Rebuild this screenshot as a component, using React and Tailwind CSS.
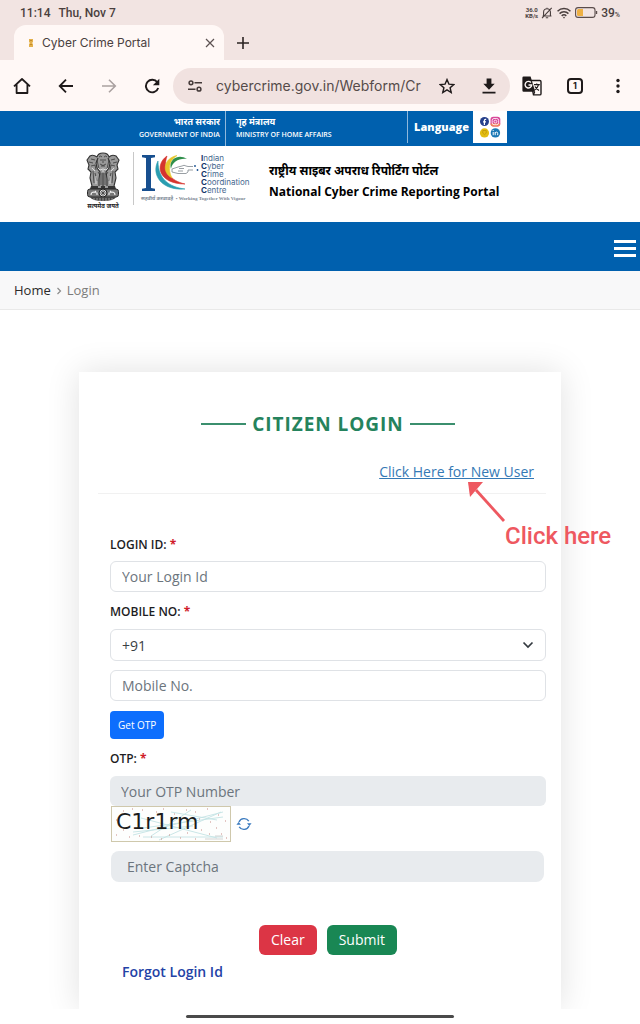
import { useState } from "react";

function Favicon() {
  return (
    <svg viewBox="0 0 8 10" className="h-[10px] w-2 shrink-0" aria-hidden="true">
      <path d="M2 1h4v3L5 5l1 1v3H2V6l1-1-1-1z" fill="#e3b04b" />
      <path d="M3 2h2v1H3zM3 6h2v1H3z" fill="#c48a2a" />
    </svg>
  );
}

function StatusBar() {
  return (
    <div className="flex h-[25px] items-center justify-between pl-5 pr-5 font-['Roboto',sans-serif] text-[#4a3f3e]">
      <div className="flex gap-2 text-xs font-medium">
        <span>11:14</span>
        <span>Thu, Nov 7</span>
      </div>
      <div className="flex items-center gap-[3px]">
        <div className="text-center text-[6px] font-bold leading-[6px]">
          36.0
          <br />
          KB/s
        </div>
        <svg viewBox="0 0 14 14" className="size-3" fill="none" stroke="currentColor" strokeWidth="1.3">
          <path d="M3 10.3V6a4 4 0 0 1 8 0v4.3M1.8 10.5h10.4M5.6 12.6h2.8M7 .8V2M12.5 1 1.2 13" />
        </svg>
        <svg viewBox="0 0 16 13" className="h-3 w-4" fill="none" stroke="currentColor" strokeWidth="1.6">
          <path d="M1 4.6a10 10 0 0 1 14 0M3.2 7.2a6.8 6.8 0 0 1 9.6 0M5.5 9.6a3.6 3.6 0 0 1 5 0" />
          <circle cx="8" cy="11.5" r="0.9" fill="currentColor" stroke="none" />
        </svg>
        <svg viewBox="0 0 23 11" className="h-[11px] w-[23px]" fill="none">
          <rect x="0.6" y="0.6" width="19.4" height="9.8" rx="2.5" stroke="#5a4c4b" strokeWidth="1.1" />
          <path d="M3.5 2H8v7H3.5A1.5 1.5 0 0 1 2 7.5v-4A1.5 1.500 0 0 1 3.500 2z" fill="#eeb044" />
          <path d="M21.5 4v3" stroke="#5a4c4b" strokeWidth="1.4" />
        </svg>
        <span className="text-xs font-medium">
          39<span className="text-[7px]">%</span>
        </span>
      </div>
    </div>
  );
}

function TabStrip() {
  return (
    <div className="flex h-[35px] items-stretch pl-[14px]">
      <div className="flex w-[210px] items-center rounded-t-xl bg-[#fff8f6] pl-[13px] pr-2">
        <Favicon />
        <span className="ml-[7px] flex-1 text-xs text-[#4a4040]">Cyber Crime Portal</span>
        <button type="button" aria-label="Close tab" className="text-[#5c5252]">
          <svg viewBox="0 0 12 12" className="size-3" stroke="currentColor" strokeWidth="1.2">
            <path d="m2 2 8 8M10 2l-8 8" />
          </svg>
        </button>
      </div>
      <button type="button" aria-label="New tab" className="ml-3 text-[#2b2322]">
        <svg viewBox="0 0 14 14" className="size-[14px]" stroke="currentColor" strokeWidth="1.6">
          <path d="M7 1v12M1 7h12" />
        </svg>
      </button>
    </div>
  );
}

function BrowserToolbar() {
  return (
    <div className="flex h-[51px] items-center bg-[#fff8f6] pl-[13px] pr-[19px] text-[#1f1a1a]">
      <div className="flex w-[160px] items-center justify-between pr-[13px]">
        <button type="button" aria-label="Home">
          <svg viewBox="0 0 18 18" className="size-[18px]" fill="none" stroke="currentColor" strokeWidth="1.8">
            <path d="M1 9.3 9 2l8 7.3M3.6 7.2V16h10.8V7.2" strokeLinejoin="round" />
          </svg>
        </button>
        <button type="button" aria-label="Back">
          <svg viewBox="0 0 16 16" className="size-4" fill="none" stroke="currentColor" strokeWidth="1.8">
            <path d="M15 8H2M8 1.7 1.7 8 8 14.3" />
          </svg>
        </button>
        <button type="button" aria-label="Forward" disabled className="text-[#aaa1a0]">
          <svg viewBox="0 0 16 16" className="size-4" fill="none" stroke="currentColor" strokeWidth="1.6">
            <path d="M1 8h13M8 1.7 14.3 8 8 14.3" />
          </svg>
        </button>
        <button type="button" aria-label="Reload">
          <svg viewBox="0 0 16 16" className="size-4" fill="none">
            <path d="M13.3 4.3A6.3 6.3 0 1 0 14.2 10" stroke="currentColor" strokeWidth="1.9" />
            <path d="M15.3.8v6.4H8.9z" fill="currentColor" />
          </svg>
        </button>
      </div>

      <div className="flex h-9 flex-1 items-center rounded-full bg-[#f1e2e0] pl-[14px] pr-[14px]">
        <svg viewBox="0 0 16 14" className="h-[14px] w-4 shrink-0" fill="none" stroke="#443a39" strokeWidth="1.5">
          <circle cx="4" cy="3.8" r="1.9" />
          <circle cx="12" cy="10.2" r="1.9" />
          <path d="M7.5 3.8H15M1 10.2h7.5" />
        </svg>
        <input
          aria-label="Address"
          defaultValue="cybercrime.gov.in/Webform/Cr"
          className="ml-[13px] w-0 flex-1 bg-transparent text-sm text-[#554b4a] outline-none"
        />
        <button type="button" aria-label="Bookmark" className="ml-[14px]">
          <svg viewBox="0 0 16 16" className="size-4" fill="none" stroke="currentColor" strokeWidth="1.4">
            <path d="m8 1.6 1.9 4.5 4.9.4-3.7 3.2 1.1 4.8L8 11.9l-4.200 2.600 1.100-4.800L1.200 6.500l4.900-.4z" />
          </svg>
        </button>
        <button type="button" aria-label="Download" className="ml-[27px]">
          <svg viewBox="0 0 14 16" className="h-4 w-[14px]" fill="currentColor">
            <path d="M4.6.5h4.8v5.3h3.3L7 11.7 1.3 5.8h3.3zM.5 13.7h13v1.7H.5z" />
          </svg>
        </button>
      </div>

      <div className="flex items-center pl-3">
        <button type="button" aria-label="Translate">
          <svg viewBox="0 0 20 20" className="size-5" fill="none">
            <path d="M8.5 4.5h9.3a1.2 1.2 0 0 1 1.2 1.2v12a1.2 1.2 0 0 1-1.2 1.2h-6.3z" stroke="#1f1a1a" strokeWidth="1.4" />
            <path d="M1.6.6h7l4.6 15.2H1.6A1.2 1.2 0 0 1 .4 14.6V1.8A1.2 1.2 0 0 1 1.6.6z" fill="#1f1a1a" />
            <path d="M8.9 6.5A3.3 3.3 0 1 0 9.7 9H6.5" stroke="#fff8f6" strokeWidth="1.4" />
            <path d="M12 8.7h5.8M14.7 7.4v1.3M16.6 8.700c-.6 2.200-2 4-4 5.300M13 10.500c.8 1.600 2.200 3 4 4M12.700 15.800l-1.200 3" stroke="#1f1a1a" strokeWidth="1.2" />
          </svg>
        </button>
        <button
          type="button"
          aria-label="Open tabs"
          className="ml-[25px] flex size-4 items-center justify-center rounded-sm border-2 border-[#1f1a1a] text-[9px] font-bold"
        >
          1
        </button>
        <button type="button" aria-label="Menu" className="ml-8">
          <svg viewBox="0 0 6 16" className="h-4 w-[6px]" fill="currentColor">
            <circle cx="3" cy="2.5" r="1.7" />
            <circle cx="3" cy="8" r="1.7" />
            <circle cx="3" cy="13.5" r="1.7" />
          </svg>
        </button>
      </div>
    </div>
  );
}

function SocialIcons() {
  return (
    <svg viewBox="0 0 22 22" className="size-[22px]" aria-hidden="true">
      <circle cx="5.5" cy="5.5" r="4.5" fill="#27408b" />
      <path d="M7.2 3.3h-.8q-1 0-1 1V9M4 5.9h3" stroke="#fff" strokeWidth="1.2" fill="none" />
      <rect x="11.5" y="0.8" width="9.8" height="9.6" rx="2.8" fill="#d9489a" />
      <path d="M11.5 7.5h9.8a2.9 2.9 0 0 1-2.8 2.9h-4.2a2.8 2.8 0 0 1-2.8-2.9z" fill="#f0805a" />
      <rect x="13.2" y="2.5" width="6.4" height="6.2" rx="1.8" fill="none" stroke="#fff" strokeWidth="0.8" />
      <circle cx="16.4" cy="5.6" r="1.4" fill="none" stroke="#fff" strokeWidth="0.8" />
      <circle cx="5.5" cy="16.9" r="4.6" fill="#e3bd12" />
      <path d="M3.8 14.5h3.4v2.6l-1.7 1.6-1.7-1.6z" fill="none" stroke="#b78f08" strokeWidth="0.7" />
      <circle cx="16.4" cy="16.9" r="4.7" fill="#1b78b5" />
      <path d="M14.2 16v3.2M14.2 14.1v.9M16.2 19.2V16M16.2 17.2q.2-1.1 1.3-1.1t1.2 1.2v1.9" stroke="#fff" strokeWidth="1" fill="none" />
    </svg>
  );
}

function GovernmentBar() {
  return (
    <div className="flex h-[35px] bg-[#0060ae] text-white">
      <div className="flex w-[226px] flex-col justify-center gap-[3px] border-r border-[#8fb8dc] pr-[5px] text-right">
        <span className="text-[9px] font-bold leading-[10px]">भारत सरकार</span>
        <span className="text-[7px] font-semibold leading-[10px]">GOVERNMENT OF INDIA</span>
      </div>
      <div className="flex w-[181px] flex-col justify-center gap-[3px] pl-[10px]">
        <span className="text-[9px] font-bold leading-[10px]">गृह मंत्रालय</span>
        <span className="text-[7px] font-semibold leading-[10px]">MINISTRY OF HOME AFFAIRS</span>
      </div>
      <div className="flex h-8 items-center border-l border-[#8fb8dc] pl-[6px]">
        <button type="button" className="w-[55px] text-[11px] font-extrabold">
          Language
        </button>
        <div className="ml-1 flex h-8 w-[34px] items-center justify-center bg-white">
          <SocialIcons />
        </div>
      </div>
    </div>
  );
}

// State emblem: three lions over the abacus with the wheel
function Emblem() {
  return (
    <svg viewBox="0 0 34 50" className="h-[50px] w-[34px]" fill="none" aria-hidden="true">
      <path
        d="M11 5Q12 1 17 1t6 4q3-3 7-1l3 4-2 5 1 4-3 3 1 6-2 8-3 2H9l-3-2-2-8 1-6-3-3 1-4-2-5 3-4q4-2 7 1z"
        fill="#9a9a9a"
      />
      <path
        d="M11 5Q12 1 17 1t6 4q3-3 7-1l3 4-2 5 1 4-3 3 1 6-2 8M11 5Q7 2 4 4L1 8l2 5-1 4 3 3-1 6 2 8M12 6l-2 5 1 5 3 4-1 7v7M22 6l2 5-1 5-3 4 1 7v7M17 20v15"
        stroke="#333"
        strokeWidth="1.1"
      />
      <path
        d="M13 5q2-2 3 0M18 5q2-2 3 0M14 8h2M18 8h2M17 7v4M14 12q3 3 6 0M15 14h4M11 8l2 9M23 8l-2 9M5 7l4 1M29 7l-4 1M3 10l4 1M31 10l-4 1M5 14l4-1 1 5M29 14l-4-1-1 5M7 19l1 12M27 19l-1 12M9 21l2 8M25 21l-2 8M15 21v12M19 21v12M12 20l2 3M22 20l-2 3"
        stroke="#2c2c2c"
        strokeWidth="0.7"
      />
      <path d="m12 16 2 2 3-1 3 1 2-2M6 16l3 3M28 16l-3 3M10 24v8M24 24v8M17 18v3" stroke="#eee" strokeWidth="0.8" />
      <path d="M5 34h7v2h3v-2h4v2h3v-2h7l1 3H4z" fill="#363636" />
      <rect x="1.5" y="37" width="31" height="8" rx="2.5" fill="#777" stroke="#2b2b2b" />
      <circle cx="17" cy="41" r="4" fill="#ddd" stroke="#222" />
      <path d="M17 37v8M13 41h8M14.2 38.2l5.6 5.6M19.8 38.2l-5.6 5.6" stroke="#333" strokeWidth="0.7" />
      <path d="M5 43q0-3 3-3l3 1v2M9 40l1-1M23 43v-2l3-1q3 0 3 3M25 40l-1-1" stroke="#f2f2f2" strokeWidth="1.1" />
      <path d="M4 45q2 4 13 4t13-4z" fill="#444" />
      <path d="M8 46v2M11 46v2M14 46v3M17 46v3M20 46v3M23 46v2M26 46v2" stroke="#bbb" strokeWidth="0.7" />
    </svg>
  );
}

function CoordinationMark() {
  return (
    <svg viewBox="0 0 58 38" className="h-[38px] w-[58px] shrink-0" fill="none" aria-hidden="true">
      <path d="M1 1h13v2.2l-4 .8v30l4 .8V37H1v-2.200l4-.8V4l-4-.8z" fill="#174f8f" />
      <path d="M17 7C10 20 20 37 44 35 28 33 17 25 17 7z" fill="#2a9db0" stroke="#2a9db0" strokeWidth="0.6" />
      <path d="M26 2C13 11 18 30 44 30 30 27 21 17 26 2z" fill="#d5342e" stroke="#d5342e" strokeWidth="0.6" />
      <path d="M36 1.500C23 4 20 18 31 24 27 16 27 7 36 1.500z" fill="#e7c62c" stroke="#e7c62c" strokeWidth="0.6" />
      <path d="M46 5C37-1 27 6 30 15c1-7 8-11 16-10z" fill="#2f8f4b" />
      <path
        d="m31 15 6-2 4-1q2-1.500 4 0l2 .5h5M31 15v3l6 1.500h8l2-1.500V16h5M38 14.500h5M37 17h5"
        stroke="#6d757d"
        strokeWidth="0.7"
      />
      <circle cx="54" cy="12" r="0.9" fill="#174f8f" />
      <circle cx="56.500" cy="16" r="0.9" fill="#174f8f" />
    </svg>
  );
}

const coordinationWords = ["Indian", "Cyber", "Crime", "Coordination", "Centre"];

function SiteHeader() {
  return (
    <header className="flex h-[76px] items-start bg-white pl-[86px] pt-[6px]">
      <div className="flex w-[34px] flex-col items-center">
        <Emblem />
        <span className="whitespace-nowrap text-[6px] font-bold leading-[9px] text-[#222]">सत्यमेव जयते</span>
      </div>
      <div className="ml-[13px] h-[53px] border-l border-[#c8c8c8]" />
      <div className="ml-[7px] w-[112px] pt-[2px]">
        <div className="flex gap-[2px]">
          <CoordinationMark />
          <ul className="font-['Inter',sans-serif] text-[8px] leading-[8px] text-[#47698f]">
            {coordinationWords.map((word) => (
              <li key={word}>
                <b className="text-[#14386b]">{word[0]}</b>
                {word.slice(1)}
              </li>
            ))}
          </ul>
        </div>
        <p className="whitespace-nowrap font-['Liberation_Serif','Noto_Sans',serif] text-[5px] font-bold leading-[10px] text-[#7b8794]">
          सहवीर्यं करवावहै &nbsp;• Working Together With Vigour
        </p>
      </div>
      <div className="pl-4 pt-2 text-xs font-bold leading-[21px] text-black">
        <p>राष्ट्रीय साइबर अपराध रिपोर्टिंग पोर्टल</p>
        <p>National Cyber Crime Reporting Portal</p>
      </div>
    </header>
  );
}

function Breadcrumb() {
  return (
    <nav
      aria-label="Breadcrumb"
      className="flex h-[39px] items-center border-b border-[#e9e9e9] bg-[#f8f8f9] pl-[14px] pt-[2px] text-[13px]"
    >
      <a href="#home" className="text-[#2b2b2b]">
        Home
      </a>
      <svg viewBox="0 0 6 8" className="mx-[5px] h-2 w-[6px]" fill="none" stroke="#8b8b8b" strokeWidth="1.200">
        <path d="m1.500 1 3 3-3 3" />
      </svg>
      <span className="text-[#7c7c7c]">Login</span>
    </nav>
  );
}

function FieldLabel({ htmlFor, children }) {
  return (
    <label htmlFor={htmlFor} className="block text-xs font-semibold leading-[18px] text-[#1d1d1f]">
      {children} <span className="font-bold text-[#d01c2a]">*</span>
    </label>
  );
}

function CaptchaImage() {
  return (
    <svg viewBox="0 0 120 36" className="h-9 w-[120px]" role="img" aria-label="Captcha">
      <rect x="0.5" y="0.5" width="119" height="35" fill="#fdfefd" stroke="#cfc8ac" />
      <path
        d="M22 29 112 6M32 22l80-11M48 34l62-28M40 30l40-26M30 12l76 20M22 26l60-6M60 6l46 8M32 31h80"
        stroke="#c4e3e4"
        strokeWidth="0.9"
        fill="none"
      />
      <path
        d="M5 29h1M12 24h1M18 31h1M28 30h1M40 31h1M31 4h1M45 6h1M52 3h1M63 8h1M75 4h1M84 6h1M96 3h1M107 9h1M114 15h1M105 22h1M98 28h1M90 24h1M84 33h1M76 27h1M69 32h1M58 29h1M50 33h1M12 5h1M21 3h1M5 14h1M110 28h1M115 32h1M88 13h1M99 16h1"
        stroke="#c98b86"
        strokeWidth="1"
      />
      <path d="M94 33h18M104 30h8" stroke="#bbb" strokeWidth="0.6" />
      <text x="5" y="23" fontFamily="DejaVu Sans, sans-serif" fontSize="22" fill="#1c1c1c">
        C1r1rm
      </text>
    </svg>
  );
}

function ClickHint() {
  return (
    <div className="pointer-events-none absolute -top-[14px] left-[353px] w-[180px]" aria-hidden="true">
      <svg viewBox="0 0 40 42" className="ml-4 h-[42px] w-10">
        <path d="m9 10 28 31" stroke="#ee5860" strokeWidth="2.800" />
        <path d="M1 2h15L3 17z" fill="#ee5860" />
      </svg>
      <p className="ml-[54px] whitespace-nowrap font-['Roboto',sans-serif] text-2xl font-medium leading-7 text-[#ee5860]">
        Click here
      </p>
    </div>
  );
}

const inputClass =
  "block h-[31px] w-full rounded-md border border-[#dfe2e6] bg-white px-[11px] text-sm text-[#212529] placeholder-[#6c757d] outline-none";

function LoginCard() {
  const [loginId, setLoginId] = useState("");
  const [mobile, setMobile] = useState("");
  const [otp, setOtp] = useState("");
  const [captcha, setCaptcha] = useState("");

  const clearForm = () => {
    setLoginId("");
    setMobile("");
    setOtp("");
    setCaptcha("");
  };

  return (
    <section className="mx-[79px] mt-[62px] bg-white px-[15px] pb-[26px] pt-10 shadow-[0_0_32px_rgba(0,0,0,0.12)]">
      <div className="flex items-center justify-center gap-[6px] pl-4">
        <span className="h-[2px] w-[45px] bg-[#3b8f6e]" />
        <h1 className="text-[19px] font-bold leading-6 tracking-wider text-[#25835d]">CITIZEN LOGIN</h1>
        <span className="h-[2px] w-[45px] bg-[#3b8f6e]" />
      </div>

      <div className="mt-[26px] flex justify-end pr-3">
        <a href="#register" className="text-sm leading-5 text-[#3579b5] underline">
          Click Here for New User
        </a>
      </div>
      <div className="relative ml-1 mt-[11px] border-t border-[#f1f1f1]">
        <ClickHint />
      </div>

      <form onSubmit={(e) => e.preventDefault()} className="pl-4 pt-[42px]">
        <FieldLabel htmlFor="login-id">LOGIN ID:</FieldLabel>
        <input
          id="login-id"
          value={loginId}
          onChange={(e) => setLoginId(e.target.value)}
          placeholder="Your Login Id"
          className={`${inputClass} mt-[7px]`}
        />

        <div className="mt-[11px]">
          <FieldLabel htmlFor="mobile">MOBILE NO:</FieldLabel>
        </div>
        <div className="relative mt-2">
          <select
            aria-label="Country code"
            className="block h-8 w-full appearance-none rounded-md border border-[#dfe2e6] bg-white px-[11px] pt-[2px] text-sm text-[#3a3f44] outline-none"
          >
            <option>+91</option>
          </select>
          <svg
            viewBox="0 0 12 8"
            className="pointer-events-none absolute right-3 top-3 h-2 w-3"
            fill="none"
            stroke="#343a40"
            strokeWidth="1.700"
          >
            <path d="m1.500 1.500 4.500 4.500 4.500-4.500" />
          </svg>
        </div>
        <input
          id="mobile"
          type="tel"
          value={mobile}
          onChange={(e) => setMobile(e.target.value)}
          placeholder="Mobile No."
          className={`${inputClass} mt-[9px]`}
        />

        <button
          type="button"
          className="mt-[10px] block h-7 rounded bg-[#0d6efd] px-2 text-[10px] text-white"
        >
          Get OTP
        </button>

        <div className="mt-[11px]">
          <FieldLabel htmlFor="otp">OTP:</FieldLabel>
        </div>
        <input
          id="otp"
          value={otp}
          onChange={(e) => setOtp(e.target.value)}
          placeholder="Your OTP Number"
          className="mt-2 block h-[30px] w-full rounded-md bg-[#e8ebee] px-[11px] text-sm placeholder-[#6c757d] outline-none"
        />

        <div className="flex items-center gap-[5px] pl-px">
          <CaptchaImage />
          <button type="button" aria-label="Refresh captcha">
            <svg viewBox="0 0 16 16" className="size-4" fill="none">
              <path d="M3 6a5.600 5.600 0 0 1 9.800-.9M13 10a5.600 5.600 0 0 1-9.800.9" stroke="#3d7cc0" strokeWidth="1.400" />
              <path d="M11 7.300h4.600L13.400 10zM.4 8.700H5L2.600 6z" fill="#3d7cc0" />
            </svg>
          </button>
        </div>
        <div className="mt-[9px] pl-px pr-[2px]">
          <input
            aria-label="Captcha"
            value={captcha}
            onChange={(e) => setCaptcha(e.target.value)}
            placeholder="Enter Captcha"
            className="block h-[31px] w-full rounded-lg bg-[#e8ebee] px-4 text-sm placeholder-[#6c757d] outline-none"
          />
        </div>

        <div className="mt-[43px] flex justify-center gap-[10px]">
          <button
            type="button"
            onClick={clearForm}
            className="h-[30px] rounded-md bg-[#dc3545] px-3 text-sm text-white"
          >
            Clear
          </button>
          <button type="submit" className="h-[30px] rounded-md bg-[#198754] px-3 text-sm text-white">
            Submit
          </button>
        </div>
        <a href="#forgot" className="ml-3 mt-[7px] inline-block text-sm font-semibold leading-5 text-[#2342a6]">
          Forgot Login Id
        </a>
      </form>
    </section>
  );
}

export default function App() {
  return (
    <div className="flex min-h-screen flex-col bg-white font-['Open_Sans','Noto_Sans',sans-serif]">
      <div className="bg-[#f2e4e2] font-['Inter',sans-serif]">
        <StatusBar />
        <TabStrip />
        <BrowserToolbar />
      </div>
      <GovernmentBar />
      <SiteHeader />
      <div className="flex h-[49px] items-center justify-end bg-[#0060ae] pr-1">
        <button type="button" aria-label="Open menu" className="flex flex-col gap-1 pt-1">
          <span className="h-[3px] w-[22px] bg-white" />
          <span className="h-[3px] w-[22px] bg-white" />
          <span className="h-[3px] w-[22px] bg-white" />
        </button>
      </div>
      <Breadcrumb />
      <main className="flex-1 overflow-hidden">
        <LoginCard />
      </main>
      <footer className="flex h-[15px] items-center justify-center bg-white">
        <span className="h-[3px] w-[268px] rounded-full bg-[#4a4a4a]" />
      </footer>
    </div>
  );
}
